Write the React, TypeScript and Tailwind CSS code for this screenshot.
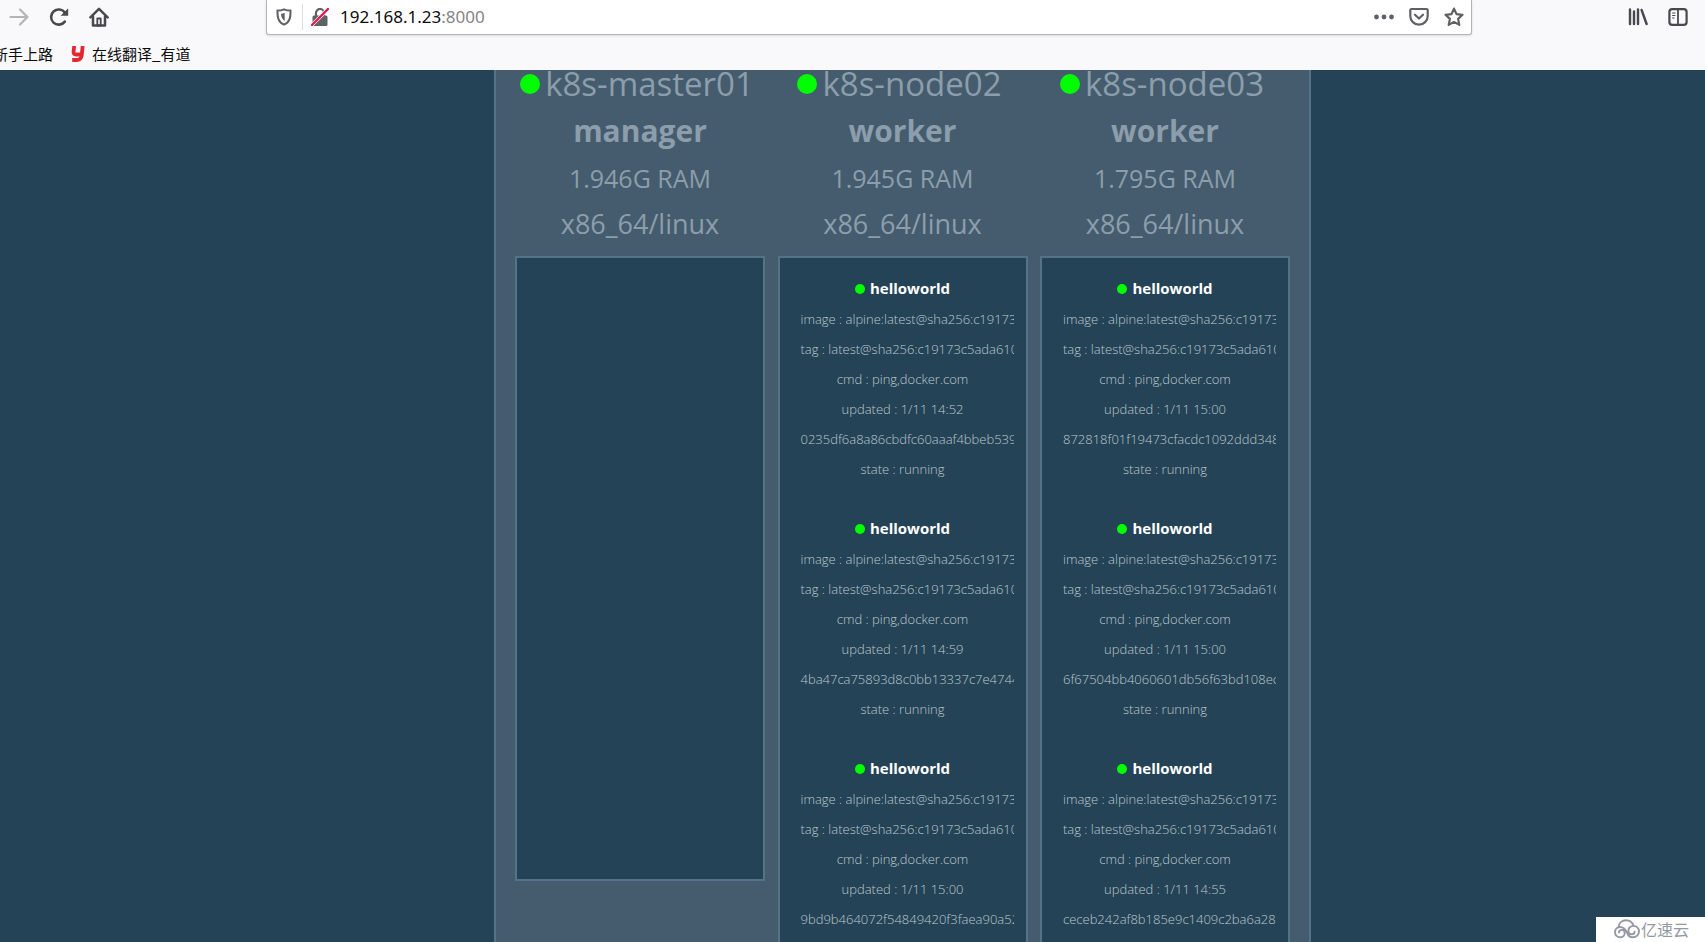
type Task = { updated: string; id: string };
type ClusterNode = { name: string; role: string; ram: string; tasks: Task[] };

const NODES: ClusterNode[] = [
  { name: "k8s-master01", role: "manager", ram: "1.946G RAM", tasks: [] },
  {
    name: "k8s-node02",
    role: "worker",
    ram: "1.945G RAM",
    tasks: [
      { updated: "1/11 14:52", id: "0235df6a8a86cbdfc60aaaf4bbeb539" },
      { updated: "1/11 14:59", id: "4ba47ca75893d8c0bb13337c7e4744" },
      { updated: "1/11 15:00", id: "9bd9b464072f54849420f3faea90a52" },
    ],
  },
  {
    name: "k8s-node03",
    role: "worker",
    ram: "1.795G RAM",
    tasks: [
      { updated: "1/11 15:00", id: "872818f01f19473cfacdc1092ddd3485" },
      { updated: "1/11 15:00", id: "6f67504bb4060601db56f63bd108ecf" },
      { updated: "1/11 14:55", id: "ceceb242af8b185e9c1409c2ba6a283" },
    ],
  },
];

function Toolbar() {
  return (
    <div className="flex h-[35px] items-start">
      <div className="flex h-[34px] items-center gap-5 pl-[9px] text-[#48494c]">
        <button aria-label="Forward" className="text-[#b5b5b8]">
          <svg viewBox="0 0 20 20" className="h-5 w-5" fill="none" stroke="currentColor" strokeWidth="2.200" strokeLinecap="round" strokeLinejoin="round">
            <path d="M1.500 10h17M11 2.500l7.500 7.500-7.500 7.500" />
          </svg>
        </button>
        <button aria-label="Reload">
          <svg viewBox="0 0 20 20" className="h-5 w-5" fill="none" stroke="currentColor" strokeWidth="2.600" strokeLinecap="round">
            <path d="M15.800 14.600A7.600 7.600 0 1 1 16 5.800" />
            <path d="M19.200 1.200v7.600h-7.600z" fill="currentColor" stroke="none" />
          </svg>
        </button>
        <button aria-label="Home">
          <svg viewBox="0 0 20 20" className="h-5 w-5" fill="none" stroke="currentColor" strokeWidth="2.500" strokeLinecap="round" strokeLinejoin="round">
            <path d="M1.400 10.400L10 1.800l8.600 8.600" />
            <path d="M4 9.500V18.500h12V9.500" />
            <path d="M8.300 18.500v-7h3.400v7z" strokeWidth="1.800" />
          </svg>
        </button>
      </div>
      <div className="ml-[157px] flex h-[35px] flex-1 items-start rounded-b-[3px] border border-t-0 border-[#b4b4b7] bg-white shadow-sm">
        <div className="flex h-[34px] flex-1 items-center text-[#606164]">
          <svg viewBox="0 0 16 18" className="ml-[9px] h-[18px] w-4" fill="none" stroke="currentColor" strokeWidth="2">
            <path d="M8 1.300c2 .9 4.300 1.300 6.600 1.300 0 6.500-.6 11.600-6.600 14C2 14.200 1.400 9.100 1.400 2.600 3.700 2.600 6 2.200 8 1.300z" strokeLinejoin="round" />
            <path d="M8.700 4.700v8.300c-2.400-1.500-3.600-4-3.700-7.200 1.300-.2 2.600-.5 3.700-1.100z" fill="currentColor" stroke="none" />
          </svg>
          <span className="ml-[10px] h-[26px] w-px bg-[#dddddf]" />
          <svg viewBox="0 0 18 18" className="ml-[8px] h-[18px] w-[18px]" fill="none">
            <path d="M5 8.500V5a4 4 0 0 1 8 0v3.500" stroke="currentColor" strokeWidth="2.200" />
            <rect x="1.500" y="7.500" width="15" height="10.500" rx="1.500" fill="currentColor" />
            <path d="M1 17L17 1" stroke="#fff" strokeWidth="3.600" />
            <path d="M1 17L17 1" stroke="#e0194e" strokeWidth="2.400" strokeLinecap="round" />
          </svg>
          <span className="ml-[11px] flex-1 font-['Noto_Sans',sans-serif] text-[17px] text-[#0c0c0d]">
            192.168.1.23<span className="text-[#858587]">:8000</span>
          </span>
          <div className="flex items-center gap-[15px] pr-[7px]">
            <button aria-label="Page actions">
              <svg viewBox="0 0 20 20" className="h-5 w-5" fill="currentColor">
                <circle cx="2.500" cy="10" r="2.400" />
                <circle cx="10" cy="10" r="2.400" />
                <circle cx="17.500" cy="10" r="2.400" />
              </svg>
            </button>
            <button aria-label="Save to Pocket">
              <svg viewBox="0 0 20 20" className="h-5 w-5" fill="none" stroke="currentColor" strokeWidth="2.200" strokeLinecap="round" strokeLinejoin="round">
                <path d="M2.600 2h14.800a1.300 1.300 0 0 1 1.300 1.300V9a8.700 8.700 0 0 1-17.400 0V3.300A1.300 1.300 0 0 1 2.600 2z" />
                <path d="M6 7.700l4 3.800 4-3.800" />
              </svg>
            </button>
            <button aria-label="Bookmark this page">
              <svg viewBox="0 0 20 20" className="h-5 w-5" fill="none" stroke="currentColor" strokeWidth="2.200" strokeLinejoin="round">
                <path d="M10 1.600l2.500 5.500 6 .7-4.400 4.100 1.200 6-5.300-3-5.300 3 1.200-6L1.500 7.800l6-.7z" />
              </svg>
            </button>
          </div>
        </div>
      </div>
      <div className="ml-[156px] flex h-[34px] items-center gap-5 pr-[17px] text-[#48494c]">
        <button aria-label="Library">
          <svg viewBox="0 0 20 20" className="h-5 w-5" fill="none" stroke="currentColor" strokeWidth="2.400" strokeLinecap="round">
            <path d="M2 2.500v14.500M6 4.500v12.500M10 2.500v14.500M13.600 3L18.600 17" />
          </svg>
        </button>
        <button aria-label="Sidebars">
          <svg viewBox="0 0 20 20" className="h-5 w-5" fill="none" stroke="currentColor" strokeWidth="2.200" strokeLinecap="round">
            <rect x="1.400" y="2.200" width="17.200" height="15.600" rx="2.800" />
            <path d="M10 2.500v15" strokeWidth="1.800" />
            <path d="M4.600 6h2.400M4.600 8.500h2.400M4.600 11h1.400" strokeWidth="1.200" />
          </svg>
        </button>
      </div>
    </div>
  );
}

function Bookmarks() {
  return (
    <nav className="flex h-[35px] items-center overflow-hidden pt-[2px] font-['Noto_Sans_CJK_SC',sans-serif] text-[15px] leading-5 text-[#0c0c0d]">
      <a href="#start" className="-ml-[7px] whitespace-nowrap">新手上路</a>
      <a href="#dict" className="ml-[17px] flex items-center gap-[6px] whitespace-nowrap">
        <svg viewBox="0 0 16 16" className="h-4 w-4" fill="none" stroke="#e3262f" strokeWidth="3.800">
          <path d="M4.200 0L3.600 5.500Q3.300 8.500 6 8.500H11" />
          <path d="M12.700 0L11.700 9.500Q11 14 6.500 14H2.200" />
        </svg>
        <span>在线翻译_有道</span>
      </a>
    </nav>
  );
}

function TaskItem({ task }: { task: Task }) {
  const lines = [
    "image : alpine:latest@sha256:c19173c5ada610",
    "tag : latest@sha256:c19173c5ada6105c",
    "cmd : ping,docker.com",
    `updated : ${task.updated}`,
    task.id,
    "state : running",
  ];
  return (
    <li className="mb-[29px]">
      <h3 className="flex items-center justify-center gap-[5px] text-[15px] font-bold leading-[31px] text-white">
        <span className="h-[10px] w-[10px] rounded-full bg-[#00ff00]" />
        helloworld
      </h3>
      {lines.map((line, i) => (
        <p key={i} className="overflow-hidden whitespace-nowrap px-[9px] text-center text-[13px] font-light leading-[30px] text-[#bcc7ce]">
          {line}
        </p>
      ))}
    </li>
  );
}

function NodeColumn({ node }: { node: ClusterNode }) {
  return (
    <section className="flex w-[250px] flex-col text-[#8c9eab]">
      <header className="mb-[9px] text-center">
        <h2 className="flex items-center justify-center gap-[5px] whitespace-nowrap pr-[6px] text-[33px] leading-[47px]">
          <span className="h-5 w-5 shrink-0 rounded-full bg-[#00ff00]" />
          {node.name}
        </h2>
        <p className="text-[30px] font-bold leading-[48px]">{node.role}</p>
        <p className="text-[25px] leading-[46px]">{node.ram}</p>
        <p className="text-[27px] leading-[46px]">x86_64/linux</p>
      </header>
      <ul className="min-h-[625px] border-2 border-[#557388] bg-[#254356] px-3 pt-[15px]">
        {node.tasks.map((task) => (
          <TaskItem key={task.id} task={task} />
        ))}
      </ul>
    </section>
  );
}

export default function App() {
  return (
    <div className="flex h-screen flex-col overflow-hidden bg-[#254356]">
      <div className="shrink-0 bg-[#f9f9fb]">
        <Toolbar />
        <Bookmarks />
      </div>
      <main className="flex min-h-0 flex-1 justify-center overflow-hidden pl-[100px] font-['Open_Sans',sans-serif]">
        <div className="-mt-[10px] flex w-[817px] shrink-0 items-start justify-between border-x-2 border-[#557388] bg-[#455c6e] px-[19px]">
          {NODES.map((node) => (
            <NodeColumn key={node.name} node={node} />
          ))}
        </div>
      </main>
      <div className="fixed bottom-0 right-0 flex h-[25px] items-center gap-px bg-white pb-px pl-[18px] pr-4 font-['Noto_Sans_CJK_SC',sans-serif] text-base leading-none text-[#9499a4]">
        <svg viewBox="0 0 26 20" className="h-5 w-[26px]" fill="none" stroke="currentColor" strokeWidth="1.900" strokeLinecap="round">
          <path d="M4.500 8.300C4.800 4 8 1.200 12 1.200c3.600 0 6.600 2.200 7.500 5.800" />
          <path d="M8.300 13.500a1.800 1.800 0 1 0-1 1.700c2-.8 3-3 5.200-5" stroke="none" />
          <path d="M5 13.600c0-1.600 1.200-2.700 2.700-2.700 1.700 0 3 1.300 3 3.100 0 2.400-1.900 4.300-4.500 4.300-3 0-5.200-2.200-5.200-5.100 0-3 2.300-5.200 5.200-5.200 4.700 0 6.200 4.200 7.500 7 1 2.200 2.800 3.300 5.100 3.300 3.500 0 6.200-2.600 6.200-6s-2.500-5.400-5.500-5.400c-2.900 0-5.100 2.100-5.100 4.800 0 2.100 1.500 3.600 3.400 3.600 1.600 0 2.800-1.100 2.800-2.600" />
        </svg>
        亿速云
      </div>
    </div>
  );
}
